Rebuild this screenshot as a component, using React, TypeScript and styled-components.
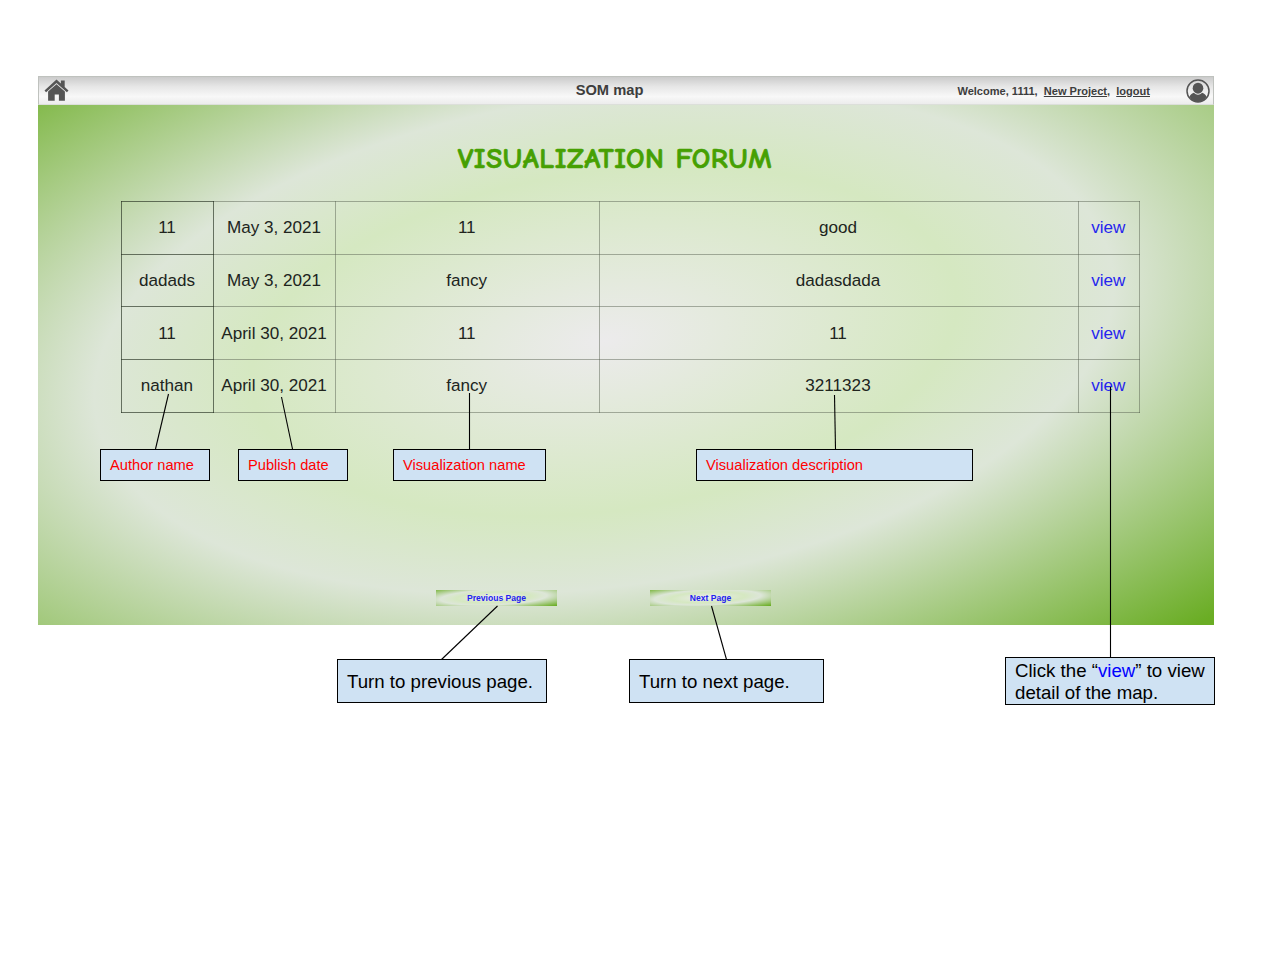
import React from "react";
import styled, { createGlobalStyle, css } from "styled-components";

const GlobalStyle = createGlobalStyle`
  body {
    margin: 0;
    background: #fff;
    font-family: "Liberation Sans", Arial, sans-serif;
  }
`;

const Slide = styled.div`
  position: relative;
  box-sizing: border-box;
  width: 1280px;
  height: 960px;
  padding: 76px 0 0 38px;
  overflow: hidden;
`;

const greenStops = css`
  #ecebec 0%, #d5e8c1 36%, #dde6d8 52%, #6aad24 95%
`;

const ForumWindow = styled.main`
  position: relative;
  isolation: isolate;
  display: flex;
  flex-direction: column;
  width: 1176px;
  height: 549px;
  overflow: hidden;

  &::before {
    content: "";
    position: absolute;
    z-index: -1;
    inset: -200px;
    transform: skewY(-6.2deg);
    transform-origin: 766px 465px;
    background: radial-gradient(980px 475px at 766px 465px, ${greenStops});
  }
`;

const TopBar = styled.header`
  display: grid;
  grid-template-columns: 1fr auto 1fr;
  align-items: center;
  box-sizing: border-box;
  height: 29px;
  padding: 0 3px 0 5px;
  border: 1px solid #bfc2be;
  border-bottom-color: #dcdfda;
  background: linear-gradient(#cbcbcb, #e6e6e6 35%, #f8f8f8 72%, #ececec);
  color: #3d3d3d;
`;

const SiteName = styled.div`
  padding: 0 35px 2px 0;
  font-size: 14.7px;
  font-weight: 700;
`;

const Account = styled.div`
  display: flex;
  justify-content: flex-end;
  align-items: center;
  font-size: 11.05px;
  font-weight: 700;
  white-space: pre;

  svg {
    margin-left: 36px;
  }
`;

const BarLink = styled.a`
  text-decoration: underline;
`;

const Title = styled.h1`
  margin: 36px 22px 0 0;
  height: 36px;
  color: #46a002;
  font: 700 29px/36px "Comic Sans MS", "Comic Neue", Lato, sans-serif;
  letter-spacing: 0.6px;
  text-align: center;
  -webkit-text-stroke: 0.7px #46a002;
`;

const ForumTable = styled.table`
  width: 1018px;
  margin: 24px 0 0 83px;
  border-collapse: collapse;
  table-layout: fixed;
  color: #20241d;
  font-size: 17.1px;
`;

const Cell = styled.td<{ $strong?: boolean; $link?: boolean }>`
  height: 50.7px;
  padding: 1px 1px 0 0;
  border: 1px solid ${(p) => (p.$strong ? "rgba(40,50,35,.66)" : "rgba(80,90,75,.46)")};
  color: ${(p) => (p.$link ? "#2525ee" : "inherit")};
  text-align: center;
`;

const Pager = styled.nav`
  display: flex;
  gap: 93px;
  margin: auto 0 19px 398px;
`;

const PageButton = styled.a`
  position: relative;
  isolation: isolate;
  width: 121px;
  height: 16px;
  overflow: hidden;
  color: #2222f0;
  font-size: 8.55px;
  font-weight: 700;
  line-height: 16px;
  text-align: center;

  &::before {
    content: "";
    position: absolute;
    z-index: -1;
    inset: -10px;
    transform: skewY(-2.1deg);
    background: radial-gradient(102px 14.5px at 48% 48%, ${greenStops});
  }
`;

const Callout = styled.div<{ $x: number; $y: number; $w: number; $h: number; $label?: boolean }>`
  position: absolute;
  left: ${(p) => p.$x}px;
  top: ${(p) => p.$y}px;
  display: flex;
  align-items: center;
  box-sizing: border-box;
  width: ${(p) => p.$w}px;
  height: ${(p) => p.$h}px;
  padding: ${(p) => (p.$label ? "0 0 1px 9px" : "2px 0 0 9px")};
  border: 1px solid #000;
  background: #cfe2f3;
  color: ${(p) => (p.$label ? "#f00" : "#000")};
  font-size: ${(p) => (p.$label ? 14.67 : 18.67)}px;
  line-height: 22px;
  white-space: nowrap;
`;

const ViewWord = styled.span`
  color: #00f;
`;

const Pointers = styled.svg`
  position: absolute;
  inset: 0;
  stroke: #000;
  stroke-width: 1.1;
`;

const HomeIcon = () => (
  <svg width="25" height="23" viewBox="0 0 25 23" fill="#555">
    <path d="M12.5 .6 16.9 4.5V1.6H20.7V7.9L24.5 11.4 22.9 13.2 12.5 4 2.1 13.2.5 11.4Z" />
    <path d="M12.5 5.2 20.9 12.6V21.8H14.9V15.6H10.7V21.8H4.1V12.6Z" />
  </svg>
);

const UserIcon = () => (
  <svg width="24" height="24" viewBox="0 0 24 24">
    <circle cx="12" cy="12" r="11" fill="none" stroke="#555" strokeWidth="1.5" />
    <ellipse cx="12" cy="9.2" rx="5.3" ry="5.5" fill="#555" />
    <path d="M3.6 18Q4.2 15 7.8 13.8 12 17.6 16.2 13.8 19.8 15 20.4 18 17.4 23 12 23 6.6 23 3.6 18Z" fill="#555" />
  </svg>
);

const columns = [92, 122, 263.5, 479, 61.5];

const posts = [
  ["11", "May 3, 2021", "11", "good"],
  ["dadads", "May 3, 2021", "fancy", "dadasdada"],
  ["11", "April 30, 2021", "11", "11"],
  ["nathan", "April 30, 2021", "fancy", "3211323"],
];

const pointerLines = [
  [168.5, 394, 155.5, 449],
  [281.5, 397, 292.5, 449],
  [469.5, 393, 469.5, 449],
  [834.5, 395, 835.5, 449],
  [497.5, 606, 441.5, 659.5],
  [711.5, 606, 726.5, 659.5],
  [1110.5, 387, 1110.5, 657],
];

export default function App() {
  return (
    <Slide>
      <GlobalStyle />
      <ForumWindow>
        <TopBar>
          <HomeIcon />
          <SiteName>SOM map</SiteName>
          <Account>
            {"Welcome, 1111,  "}
            <BarLink>New Project</BarLink>
            {",  "}
            <BarLink>logout</BarLink>
            <UserIcon />
          </Account>
        </TopBar>
        <Title>VISUALIZATION FORUM</Title>
        <ForumTable>
          <colgroup>
            {columns.map((width, i) => (
              <col key={i} width={width} />
            ))}
          </colgroup>
          <tbody>
            {posts.map((post, row) => (
              <tr key={row}>
                {post.map((text, i) => (
                  <Cell key={i} $strong={i === 0}>
                    {text}
                  </Cell>
                ))}
                <Cell $link>view</Cell>
              </tr>
            ))}
          </tbody>
        </ForumTable>
        <Pager>
          <PageButton>Previous Page</PageButton>
          <PageButton>Next Page</PageButton>
        </Pager>
      </ForumWindow>

      <Pointers width="1280" height="960">
        {pointerLines.map(([x1, y1, x2, y2], i) => (
          <line key={i} x1={x1} y1={y1} x2={x2} y2={y2} />
        ))}
      </Pointers>

      <Callout $label $x={100} $y={449} $w={110} $h={32}>Author name</Callout>
      <Callout $label $x={238} $y={449} $w={110} $h={32}>Publish date</Callout>
      <Callout $label $x={393} $y={449} $w={153} $h={32}>Visualization name</Callout>
      <Callout $label $x={696} $y={449} $w={277} $h={32}>Visualization description</Callout>
      <Callout $x={337} $y={659} $w={210} $h={44}>Turn to previous page.</Callout>
      <Callout $x={629} $y={659} $w={195} $h={44}>Turn to next page.</Callout>
      <Callout $x={1005} $y={657} $w={210} $h={48}>
        <div>
          Click the “<ViewWord>view</ViewWord>” to view
          <br />
          detail of the map.
        </div>
      </Callout>
    </Slide>
  );
}
